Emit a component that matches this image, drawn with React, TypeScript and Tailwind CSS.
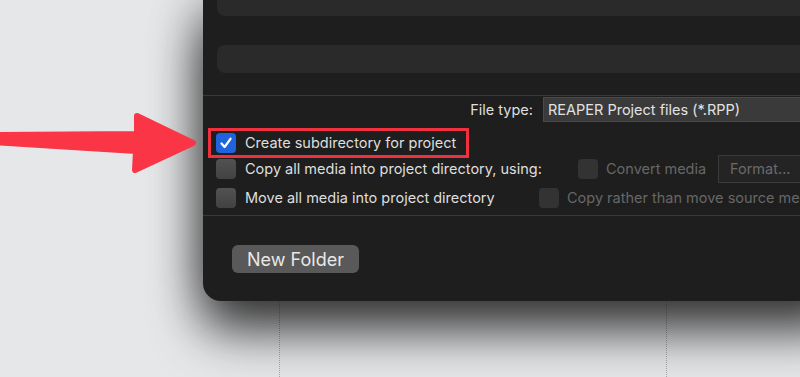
import React from "react";

const font = { fontFamily: "Inter, 'Liberation Sans', sans-serif" };

function Check({ checked, disabled }: { checked?: boolean; disabled?: boolean }) {
  if (checked) {
    return (
      <div className="w-[20px] h-[20px] shrink-0 rounded-[4px] bg-[#1f64de] flex items-center justify-center">
        <svg width="14" height="14" viewBox="0 0 14 14">
          <path d="M2.5 7.5 L5.6 11 L11.5 2.8" fill="none" stroke="#ffffff" strokeWidth="2.3" strokeLinecap="round" strokeLinejoin="round" />
        </svg>
      </div>
    );
  }
  return (
    <div
      className={
        disabled
          ? "w-[20px] h-[20px] shrink-0 rounded-[4px] bg-[#333333]"
          : "w-[20px] h-[20px] shrink-0 rounded-[4px] bg-gradient-to-b from-[#525252] to-[#424242]"
      }
    />
  );
}

export default function App() {
  return (
    <div className="relative w-[800px] h-[377px] overflow-hidden bg-[#e6e7e9]" style={font}>
      {/* desktop dotted guide lines */}
      <div className="absolute left-[279px] top-0 h-full border-l border-dotted border-[#a9aaac]" />
      <div className="absolute left-[666px] top-0 h-full border-l border-dotted border-[#a9aaac]" />

      {/* dialog */}
      <div className="relative ml-[203px] w-[640px] bg-[#1e1e1e] rounded-bl-[18px] shadow-[0_0_50px_rgba(0,0,0,0.4),0_30px_50px_rgba(0,0,0,0.7)] text-[14.5px] text-[#dedede]">
        <div className="ml-[14px] h-[16px] rounded-b-[8px] bg-[#2a2a2a]" />
        <div className="ml-[14px] mt-[29px] h-[28px] rounded-[8px] bg-[#2a2a2a]" />
        <div className="mt-[22px] border-t border-[#383838]" />

        {/* file type */}
        <div className="mt-[1px] flex items-center h-[25px]">
          <div className="w-[330px] shrink-0 text-right">File type:</div>
          <div className="ml-[10px] h-[25px] w-[320px] shrink-0 bg-[#3a3a3a] border border-[#4a4a4a] flex items-center pl-[4px] text-[#e2e2e2]">
            REAPER Project files (*.RPP)
          </div>
        </div>

        {/* row 1 */}
        <div className="relative mt-[11px] ml-[13px] h-[20px] flex items-center gap-[9px]">
          <div className="absolute left-[-8px] top-[-5px] w-[261px] h-[30px] border-[3px] border-[#f0303f]" />
          <Check checked />
          <span>Create subdirectory for project</span>
        </div>

        {/* row 2 */}
        <div className="mt-[6px] ml-[13px] h-[20px] flex items-center">
          <Check />
          <span className="ml-[9px] w-[333px] shrink-0 whitespace-nowrap">Copy all media into project directory, using:</span>
          <Check disabled />
          <span className="ml-[8px] w-[112px] shrink-0 whitespace-nowrap text-[#676767]">Convert media</span>
          <div className="h-[28px] w-[120px] shrink-0 border border-[#3a3a3a] bg-[#242424] flex items-center pl-[11px] text-[#6a6a6a]">
            Format...
          </div>
        </div>

        {/* row 3 */}
        <div className="mt-[9px] ml-[13px] h-[20px] flex items-center">
          <Check />
          <span className="ml-[9px] w-[294px] shrink-0 whitespace-nowrap">Move all media into project directory</span>
          <Check disabled />
          <span className="ml-[8px] whitespace-nowrap text-[#676767]">Copy rather than move source media</span>
        </div>

        <div className="mt-[7px] border-t border-[#383838]" />

        <div className="pt-[29px] pb-[28px] pl-[29px]">
          <div className="w-[127px] h-[28px] rounded-[6px] bg-[#595959] flex items-center justify-center text-[18px] text-[#e8e8e8]">
            New Folder
          </div>
        </div>
      </div>

      {/* red arrow annotation */}
      <svg className="absolute left-0 top-0" width="210" height="190" viewBox="0 0 210 190">
        <polygon
          points="-6,135 137,134 137,116 193,143 135,170 136,151 -6,142"
          fill="#fa3546"
          stroke="#fa3546"
          strokeWidth="6"
          strokeLinejoin="round"
        />
      </svg>
    </div>
  );
}
